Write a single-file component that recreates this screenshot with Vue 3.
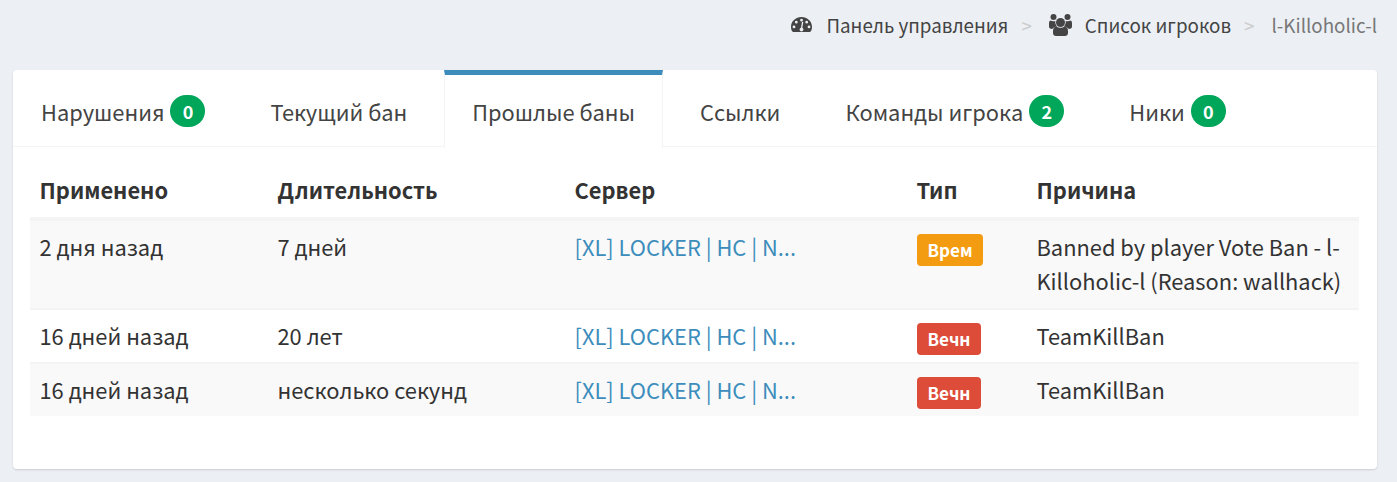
<template>
  <div class="page">
    <nav class="crumbs">
      <span class="crumb">
        <svg class="icon" viewBox="0 0 23 19" width="23" height="19">
          <path fill="#444" fill-rule="evenodd" d="M11.500 2C5.600 2 1 6.400 1 11.900c0 1.800.5 3.400 1.400 4.700.2.300.5.400.8.400h16.600c.3 0 .6-.1.800-.4.900-1.300 1.400-2.900 1.400-4.700C22 6.400 17.400 2 11.500 2zM11.500 3.800a1.400 1.400 0 1 1 0 2.800 1.400 1.400 0 0 1 0-2.800zM6.300 5.800a1.400 1.400 0 1 1 0 2.800 1.400 1.400 0 0 1 0-2.800zM16.700 5.800a1.400 1.400 0 1 1 0 2.800 1.400 1.400 0 0 1 0-2.800zM4 10.500a1.400 1.400 0 1 1 0 2.800 1.400 1.400 0 0 1 0-2.800zM19 10.500a1.400 1.400 0 1 1 0 2.800 1.400 1.400 0 0 1 0-2.800zM13.300 6.900l-1 5.900c.7.300 1.100 1 1.100 1.700 0 1-.8 1.900-1.900 1.900s-1.900-.9-1.900-1.900c0-.9.600-1.600 1.400-1.800l1-5.900z"/>
        </svg>
        Панель управления
      </span>
      <span class="sep">&gt;</span>
      <span class="crumb">
        <svg class="icon" viewBox="0 0 23 22" width="23" height="22">
          <g fill="#444">
            <circle cx="11.500" cy="8.500" r="4.500"/>
            <circle cx="4.500" cy="3" r="3"/>
            <circle cx="18.500" cy="3" r="3"/>
            <path d="M4 17c0-3 1.500-4.500 3.500-4.500 1.100.8 2.500 1.300 4 1.300s2.900-.5 4-1.300c2 0 3.500 1.500 3.500 4.500v2c0 2-1.300 3-3 3H7c-1.700 0-3-1-3-3z"/>
            <path d="M1.500 6.500c.9.500 1.900.8 3 .8.700 0 1.300-.1 1.900-.3-.4 2.200.3 4.200 1.800 5.400-2.500.2-4.300 1.300-5 2.600C1 15 0 14 0 12.500V9c0-1.200.5-2.200 1.500-2.500z"/>
            <path d="M21.500 6.500c-.9.500-1.900.8-3 .8-.7 0-1.300-.1-1.900-.3.4 2.200-.3 4.200-1.800 5.400 2.500.2 4.300 1.300 5 2.600 2.200 0 3.200-1 3.200-2.500V9c0-1.200-.5-2.200-1.500-2.500z"/>
          </g>
        </svg>
        Список игроков
      </span>
      <span class="sep">&gt;</span>
      <span class="crumb current">l-Killoholic-l</span>
    </nav>

    <section class="card">
      <ul class="tabs">
        <li v-for="tab in tabs" :key="tab.label" class="tab" :class="{ active: tab.active }">
          {{ tab.label }}
          <span v-if="tab.count !== undefined" class="count">{{ tab.count }}</span>
        </li>
      </ul>

      <div class="pane">
        <table>
          <colgroup>
            <col style="width: 238px" />
            <col style="width: 297px" />
            <col style="width: 342px" />
            <col style="width: 120px" />
            <col />
          </colgroup>
          <thead>
            <tr>
              <th>Применено</th>
              <th>Длительность</th>
              <th>Сервер</th>
              <th>Тип</th>
              <th>Причина</th>
            </tr>
          </thead>
          <tbody>
            <tr v-for="row in rows" :key="row.when + row.length">
              <td>{{ row.when }}</td>
              <td>{{ row.length }}</td>
              <td><a href="#">[XL] LOCKER | HC | N...</a></td>
              <td><span class="label" :class="row.kind">{{ row.type }}</span></td>
              <td>{{ row.reason }}</td>
            </tr>
          </tbody>
        </table>
      </div>
    </section>
  </div>
</template>

<script setup>
const tabs = [
  { label: 'Нарушения', count: 0 },
  { label: 'Текущий бан' },
  { label: 'Прошлые баны', active: true },
  { label: 'Ссылки' },
  { label: 'Команды игрока', count: 2 },
  { label: 'Ники', count: 0 },
]

const rows = [
  { when: '2 дня назад', length: '7 дней', type: 'Врем', kind: 'temp', reason: 'Banned by player Vote Ban - l-Killoholic-l (Reason: wallhack)' },
  { when: '16 дней назад', length: '20 лет', type: 'Вечн', kind: 'perm', reason: 'TeamKillBan' },
  { when: '16 дней назад', length: 'несколько секунд', type: 'Вечн', kind: 'perm', reason: 'TeamKillBan' },
]
</script>

<style>
html,
body {
  margin: 0;
  background: #ecf0f5;
}
</style>

<style scoped>
.page {
  height: 482px;
  box-sizing: border-box;
  padding: 0 20px 0 13px;
  font-family: "Noto Sans CJK SC", "Noto Sans", sans-serif;
  font-size: 21.85px;
  color: #333;
  overflow: hidden;
}

.crumbs {
  height: 70px;
  padding-bottom: 21px;
  box-sizing: border-box;
  display: flex;
  align-items: center;
  justify-content: flex-end;
  font-size: 18.8px;
  line-height: 26px;
  color: #444;
}

.crumb {
  display: flex;
  align-items: center;
}

.icon {
  margin: 0 13px 0 0;
}

.crumb.current {
  color: #777;
}

.sep {
  color: #ccc;
  margin: 0 17px 0 13px;
}

.card {
  background: #fff;
  height: 399px;
  border-radius: 4px;
  box-shadow: 0 1px 2px rgba(0, 0, 0, 0.15);
}

.tabs {
  list-style: none;
  margin: 0;
  padding: 0;
  height: 77px;
  box-sizing: border-box;
  display: flex;
  gap: 9px;
  border-bottom: 1px solid #f4f4f4;
}

.tab {
  display: flex;
  align-items: center;
  gap: 6px;
  height: 78px;
  box-sizing: border-box;
  padding: 0 28px 1px;
  color: #444;
  border-top: 5px solid transparent;
}

.tab.active {
  background: #fff;
  border-top-color: #3c8dbc;
  border-left: 1px solid #f4f4f4;
  border-right: 1px solid #f4f4f4;
  padding: 0 27px 1px;
}

.count {
  min-width: 35px;
  height: 32px;
  box-sizing: border-box;
  border-radius: 16px;
  background: #00a65a;
  color: #fff;
  font-size: 18px;
  font-weight: 700;
  display: flex;
  align-items: center;
  justify-content: center;
}

.pane {
  padding: 18px 18px 0 17px;
}

table {
  width: 100%;
  border-collapse: collapse;
  table-layout: fixed;
}

th,
td {
  padding: 9px 10px 9px 9.5px;
  text-align: left;
  vertical-align: top;
  line-height: 34px;
  font-weight: 400;
}

th {
  font-weight: 700;
  padding: 8px 10px 10px 9.5px;
  border-bottom: 4px solid #f4f4f4;
}

td {
  border-top: 2px solid #f4f4f4;
}

tbody tr:first-child td {
  border-top: 0;
  padding-bottom: 10px;
}

tbody tr:nth-child(odd) {
  background: #f9f9f9;
}

a {
  color: #3c8dbc;
  text-decoration: none;
}

.label {
  display: inline-block;
  height: 32px;
  line-height: 32px;
  padding: 0 10.5px;
  border-radius: 4px;
  color: #fff;
  font-size: 17px;
  font-weight: 700;
  vertical-align: top;
  margin: 4px 0 -2px 0.5px;
}

.temp {
  background: #f39c12;
}

.perm {
  background: #dd4b39;
}
</style>
